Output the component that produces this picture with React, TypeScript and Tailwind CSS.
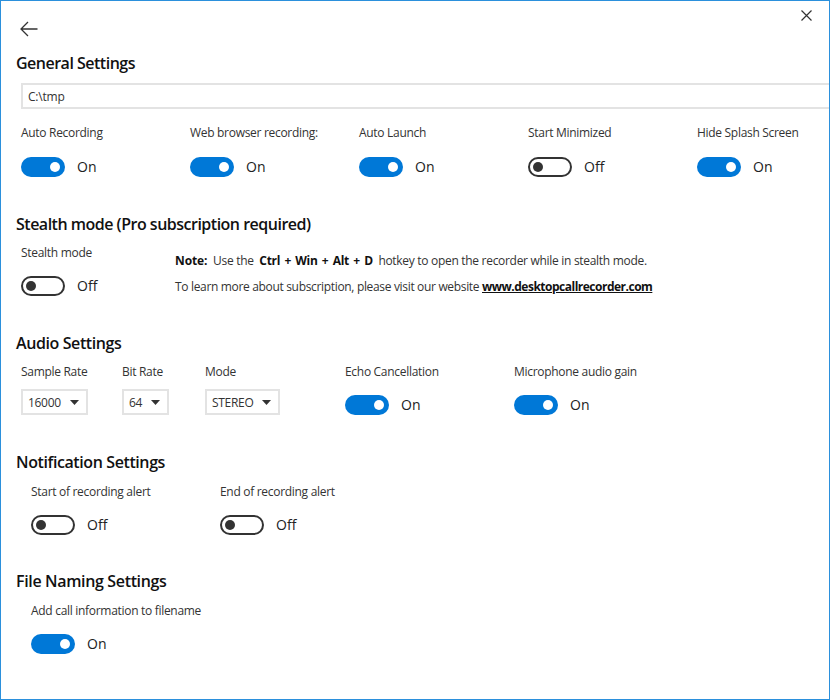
import React from "react";

const font = { fontFamily: '"Open Sans", "Noto Sans", sans-serif' };

function Toggle({ on }: { on: boolean }) {
  return (
    <div className="flex items-center h-5">
      {on ? (
        <div className="w-11 h-5 rounded-full bg-[#0078d7] flex items-center justify-end pr-[5px]">
          <div className="w-[10px] h-[10px] rounded-full bg-white" />
        </div>
      ) : (
        <div className="w-11 h-5 rounded-full border-2 border-[#333] bg-white flex items-center pl-[3px]">
          <div className="w-[10px] h-[10px] rounded-full bg-[#333]" />
        </div>
      )}
      <span className="ml-3 text-[14px] leading-5 text-[#222]">{on ? "On" : "Off"}</span>
    </div>
  );
}

function Field({ label, on, className, gap }: { label: string; on: boolean; className?: string; gap: string }) {
  return (
    <div className={className}>
      <div className="text-[12px] leading-[18px] text-[#333] tracking-[-0.3px] whitespace-nowrap h-[18px]">{label}</div>
      <div className={gap}>
        <Toggle on={on} />
      </div>
    </div>
  );
}

function Heading({ children, tracking = "tracking-[-0.5px]" }: { children: React.ReactNode; tracking?: string }) {
  return <h2 className={`text-[16px] leading-[22px] font-semibold text-[#111] whitespace-nowrap ${tracking}`}>{children}</h2>;
}

function Select({ value, className }: { value: string; className: string }) {
  return (
    <div className={`h-[26px] border-2 border-[#e3e3e3] flex items-center justify-between pl-[5px] pr-[7px] pt-[1px] text-[12px] tracking-[-0.3px] text-[#333] ${className}`}>
      <span>{value}</span>
      <svg width="9" height="5" viewBox="0 0 9 5"><path d="M0 0h9L4.5 5z" fill="#333" /></svg>
    </div>
  );
}

export default function App() {
  return (
    <div style={font} className="relative w-[830px] h-[700px] bg-white border border-[#2b90dc] overflow-hidden pl-[15px]">
      <svg className="absolute left-[19px] top-[20px]" width="18" height="16" viewBox="0 0 18 16" fill="none" stroke="#333" strokeWidth="1.3">
        <path d="M0.8 8H17.5M8 1L1 8l7 7" />
      </svg>
      <svg className="absolute left-[800px] top-[9px]" width="11" height="11" viewBox="0 0 11 11" fill="none" stroke="#333" strokeWidth="1.2">
        <path d="M0.5 0.5l10 10M10.5 0.5l-10 10" />
      </svg>

      <div className="pt-[51px]">
        <Heading>General Settings</Heading>
      </div>
      <div className="ml-[5px] mt-[9px] h-[26px] w-[900px] border-2 border-[#e3e3e3] border-r-0 flex items-center pl-[5px] pt-[2px] text-[12px] tracking-[-0.2px] text-[#333]">C:\tmp</div>
      <div className="ml-[5px] mt-[15px] flex">
        <Field gap="mt-[15px]" className="w-[169px]" label="Auto Recording" on />
        <Field gap="mt-[15px]" className="w-[169px]" label="Web browser recording:" on />
        <Field gap="mt-[15px]" className="w-[169px]" label="Auto Launch" on />
        <Field gap="mt-[15px]" className="w-[169px]" label="Start Minimized" on={false} />
        <Field gap="mt-[15px]" className="w-[120px]" label="Hide Splash Screen" on />
      </div>

      <div className="mt-[36px]">
        <Heading>Stealth mode (Pro subscription required)</Heading>
      </div>
      <div className="ml-[5px] mt-[9px] flex">
        <Field gap="mt-[14px]" className="w-[154px]" label="Stealth mode" on={false} />
        <div className="text-[12px] text-[#333] leading-[18px] pt-[8px] tracking-[-0.3px]">
          <div className="whitespace-pre">
            <b className="font-bold text-[#111] tracking-[-0.1px]">Note:</b>{"  Use the  "}
            <b className="font-bold text-[#111] tracking-[-0.3px] [word-spacing:1.5px]">Ctrl + Win + Alt + D</b>{"  hotkey to open the recorder while in stealth mode."}
          </div>
          <div className="mt-[8px] whitespace-nowrap tracking-[-0.33px]">
            To learn more about subscription, please visit our website <a className="font-bold underline text-[#111] tracking-[-0.5px]">www.desktopcallrecorder.com</a>
          </div>
        </div>
      </div>

      <div className="mt-[36px]">
        <Heading tracking="tracking-[-0.4px]">Audio Settings</Heading>
      </div>
      <div className="ml-[5px] mt-[9px] flex">
        <div className="w-[101px]">
          <div className="text-[12px] leading-[18px] text-[#333] tracking-[-0.3px]">Sample Rate</div>
          <Select value="16000" className="mt-[8px] w-[67px]" />
        </div>
        <div className="w-[83px]">
          <div className="text-[12px] leading-[18px] text-[#333] tracking-[-0.3px]">Bit Rate</div>
          <Select value="64" className="mt-[8px] w-[47px]" />
        </div>
        <div className="w-[140px]">
          <div className="text-[12px] leading-[18px] text-[#333] tracking-[-0.3px]">Mode</div>
          <Select value="STEREO" className="mt-[8px] w-[75px]" />
        </div>
        <Field gap="mt-[14px]" className="w-[169px]" label="Echo Cancellation" on />
        <Field gap="mt-[14px]" className="w-[169px]" label="Microphone audio gain" on />
      </div>

      <div className="mt-[36px]">
        <Heading tracking="tracking-[-0.4px]">Notification Settings</Heading>
      </div>
      <div className="ml-[15px] mt-[10px] flex">
        <Field gap="mt-[14px]" className="w-[189px]" label="Start of recording alert" on={false} />
        <Field gap="mt-[14px]" className="w-[169px]" label="End of recording alert" on={false} />
      </div>

      <div className="mt-[35px]">
        <Heading tracking="tracking-[-0.35px]">File Naming Settings</Heading>
      </div>
      <div className="ml-[15px] mt-[10px] flex">
        <Field gap="mt-[14px]" className="w-[220px]" label="Add call information to filename" on />
      </div>
    </div>
  );
}
